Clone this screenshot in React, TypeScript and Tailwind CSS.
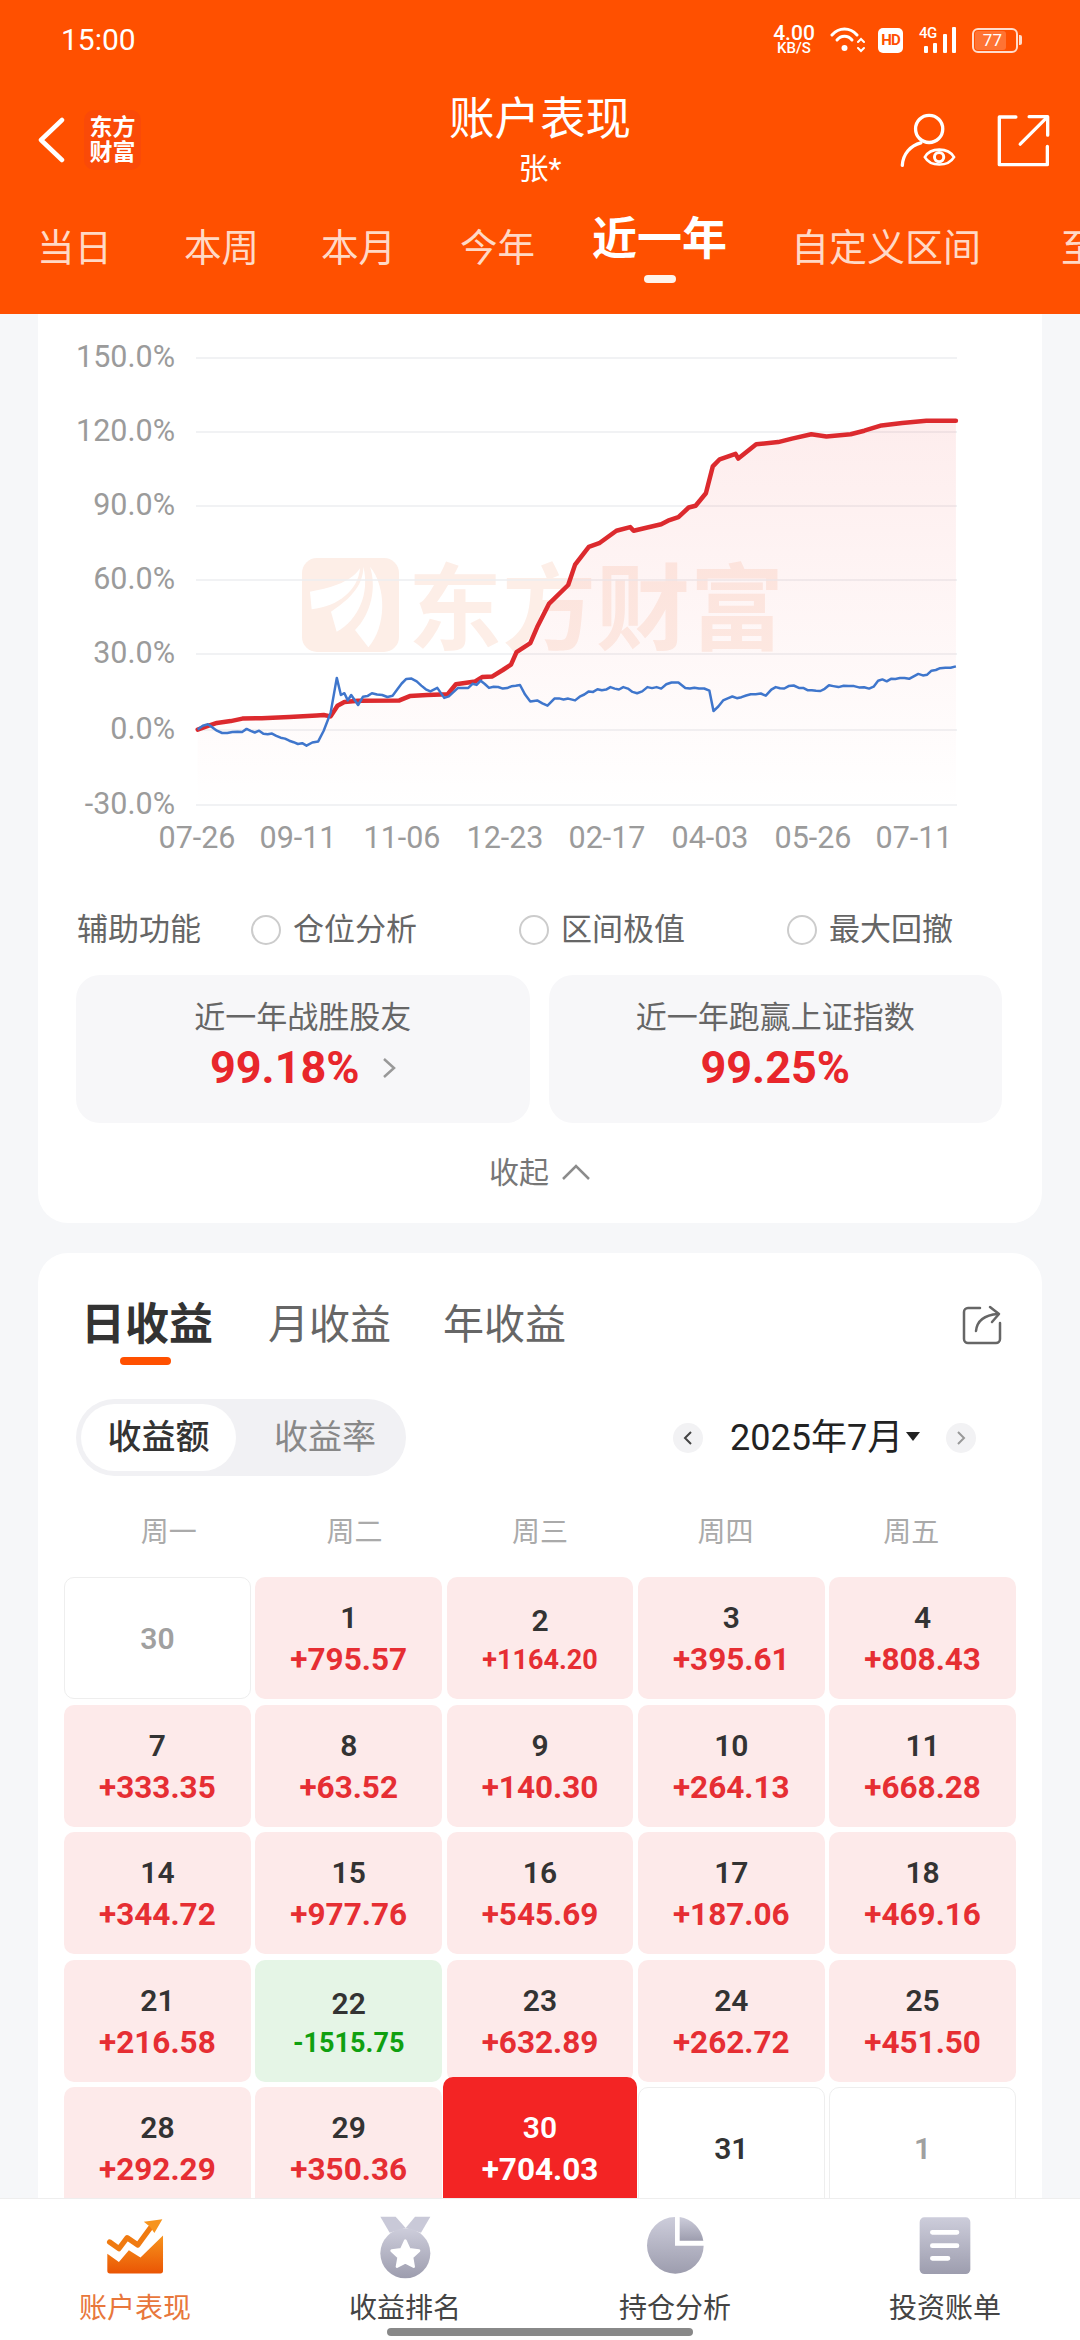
const redLine = [
  [287, 1147], [300, 1138], [315, 1128], [335, 1123], [352, 1116], [380, 1115], [420, 1112], [460, 1107], [470, 1106], [480, 1110],
  [490, 1080], [500, 1070], [520, 1066], [580, 1065], [595, 1053], [620, 1050], [650, 1048], [662, 1020], [690, 1012], [700, 1000],
  [715, 998], [730, 980], [742, 965], [750, 930], [770, 905], [780, 860], [797, 795], [825, 742], [835, 685], [855, 635],
  [870, 625], [895, 590], [915, 580], [920, 590], [960, 572], [970, 562], [985, 552], [1000, 525], [1010, 520], [1025, 485],
  [1035, 410], [1045, 390], [1068, 375], [1072, 388], [1098, 348], [1130, 342], [1150, 332], [1178, 320], [1200, 326], [1235, 320],
  [1255, 310], [1280, 295], [1310, 288], [1345, 282], [1388, 282],
];

const blueLine = [
  [287, 1147], [302, 1132], [315, 1150], [345, 1153], [358, 1145], [370, 1155], [395, 1158], [420, 1178], [445, 1192], [462, 1180],
  [470, 1150], [480, 1100], [489, 1002], [495, 1050], [500, 1045], [505, 1065], [510, 1050], [520, 1078], [527, 1055], [540, 1045],
  [555, 1050], [570, 1052], [590, 1005], [605, 1012], [625, 1040], [635, 1030], [645, 1058], [665, 1030], [680, 1030], [698, 1010],
  [710, 1030], [730, 1032], [755, 1022], [770, 1068], [780, 1065], [795, 1080], [805, 1060], [825, 1060], [835, 1065], [855, 1040],
  [880, 1035], [905, 1028], [925, 1045], [940, 1028], [960, 1032], [975, 1015], [985, 1015], [995, 1030], [1015, 1032], [1030, 1038],
  [1036, 1095], [1050, 1065], [1090, 1048], [1112, 1052], [1120, 1035], [1145, 1025], [1160, 1030], [1185, 1038], [1210, 1025], [1240, 1025],
  [1262, 1032], [1275, 1010], [1300, 1005], [1340, 995], [1365, 975], [1388, 970],
];

// traced from the chart, scaled back to page coordinates
const toPoints = (line: number[][]) =>
  line.map(([x, y]) => `${(x / 1.452).toFixed(1)},${(320 + y / 2.8).toFixed(1)}`).join(" ");

// the traced index line is too smooth, add the day to day wobble back
const wobble = (line: number[][]) => {
  const out: number[][] = [];
  line.slice(1).forEach(([x, y], i) => {
    const [px, py] = line[i];
    const steps = Math.max(1, Math.round((x - px) / 7));
    for (let s = 0; s < steps; s++) {
      const t = s / steps;
      const nx = px + (x - px) * t;
      const noise = s === 0 ? 0 : Math.sin(nx * 1.7) * 3.5 + Math.sin(nx * 0.63) * 2.5;
      out.push([nx, py + (y - py) * t + noise]);
    }
  });
  out.push(line[line.length - 1]);
  return out;
};

const gridLines = [
  { y: 358, label: "150.0%" },
  { y: 432, label: "120.0%" },
  { y: 506, label: "90.0%" },
  { y: 580, label: "60.0%" },
  { y: 654, label: "30.0%" },
  { y: 730, label: "0.0%" },
  { y: 805, label: "-30.0%" },
];

const xLabels = [
  { x: 197, label: "07-26" },
  { x: 298, label: "09-11" },
  { x: 402, label: "11-06" },
  { x: 505, label: "12-23" },
  { x: 607, label: "02-17" },
  { x: 710, label: "04-03" },
  { x: 813, label: "05-26" },
  { x: 914, label: "07-11" },
];

const tabs = [
  { label: "当日", cls: "ml-[37px]" },
  { label: "本周", cls: "ml-[72px]" },
  { label: "本月", cls: "ml-[62px]" },
  { label: "今年", cls: "ml-[64px]" },
];

type Day = { day: string; value?: string; kind: "up" | "down" | "off" | "plain" | "today" };

const days: Day[] = [
  { day: "30", kind: "off" },
  { day: "1", value: "+795.57", kind: "up" },
  { day: "2", value: "+1164.20", kind: "up" },
  { day: "3", value: "+395.61", kind: "up" },
  { day: "4", value: "+808.43", kind: "up" },
  { day: "7", value: "+333.35", kind: "up" },
  { day: "8", value: "+63.52", kind: "up" },
  { day: "9", value: "+140.30", kind: "up" },
  { day: "10", value: "+264.13", kind: "up" },
  { day: "11", value: "+668.28", kind: "up" },
  { day: "14", value: "+344.72", kind: "up" },
  { day: "15", value: "+977.76", kind: "up" },
  { day: "16", value: "+545.69", kind: "up" },
  { day: "17", value: "+187.06", kind: "up" },
  { day: "18", value: "+469.16", kind: "up" },
  { day: "21", value: "+216.58", kind: "up" },
  { day: "22", value: "-1515.75", kind: "down" },
  { day: "23", value: "+632.89", kind: "up" },
  { day: "24", value: "+262.72", kind: "up" },
  { day: "25", value: "+451.50", kind: "up" },
  { day: "28", value: "+292.29", kind: "up" },
  { day: "29", value: "+350.36", kind: "up" },
  { day: "30", value: "+704.03", kind: "today" },
  { day: "31", kind: "plain" },
  { day: "1", kind: "off" },
];

function StatusBar() {
  return (
    <div className="flex h-[80px] items-center justify-between pl-[61px] pr-[58px] text-white">
      <span className="text-[30px] leading-none">15:00</span>
      <div className="flex items-center">
        <div className="flex w-[44px] flex-col items-center font-medium">
          <span className="text-[21px] leading-[17px]">4.00</span>
          <span className="text-[15px] leading-[13px]">KB/S</span>
        </div>
        <svg className="ml-[14px]" width="35" height="27" viewBox="0 0 35 27" fill="none" stroke="white" strokeLinecap="round">
          <path d="M2 8 C9 0 20 0 27 8" strokeWidth="3" />
          <path d="M7 13 C11 8 18 8 22 13" strokeWidth="3" />
          <circle cx="14.5" cy="21" r="3" fill="white" stroke="none" />
          <path d="M28 15 L31 12 L34 15 M28 21 L31 24 L34 21" strokeWidth="2" />
        </svg>
        <span className="ml-[13px] flex h-[25px] w-[25px] items-center justify-center rounded-[5px] bg-white text-[15px] font-bold tracking-[-1px] text-[#ff5000]">
          HD
        </span>
        <div className="relative ml-[16px] h-[26px] w-[38px]">
          <span className="absolute left-0 top-[-1px] text-[15px] font-medium leading-[14px] tracking-[-0.5px]">4G</span>
          <svg className="absolute inset-0" width="38" height="26" viewBox="0 0 38 26" fill="white">
            <rect x="5" y="19" width="4" height="7" rx="1" />
            <rect x="14" y="16" width="4" height="10" rx="1" />
            <rect x="24" y="7" width="4" height="19" rx="1" />
            <rect x="33" y="0" width="4" height="26" rx="1" />
          </svg>
        </div>
        <div className="ml-[15px] flex items-center">
          <div className="h-[25px] w-[46px] rounded-[6px] border-2 border-white/80 p-[1px]">
            <div className="flex h-full w-[77%] items-center justify-center rounded-[3px] bg-white/20 pl-[4px] text-[17px] leading-none">
              77
            </div>
          </div>
          <div className="ml-[1px] h-[10px] w-[3px] rounded-r-[2px] bg-white/80" />
        </div>
      </div>
    </div>
  );
}

function NavBar() {
  return (
    <div className="grid h-[120px] grid-cols-[1fr_auto_1fr] items-center text-white">
      <div className="flex items-center pl-[38px]">
        <svg width="27" height="46" viewBox="0 0 27 46" fill="none" stroke="white" strokeWidth="4.5" strokeLinecap="round" strokeLinejoin="round">
          <polyline points="24,3 3,23 24,43" />
        </svg>
        <div className="ml-[19px] flex h-[60px] w-[57px] flex-col items-center justify-center rounded-[10px] bg-[#fa4a08] text-[23px] font-bold leading-[25px]">
          <span>东方</span>
          <span>财富</span>
        </div>
      </div>
      <div className="flex flex-col items-center">
        <span className="text-[45.5px] leading-[58px]">账户表现</span>
        <span className="text-[30px] leading-[40px]">张*</span>
      </div>
      <div className="flex items-center justify-end gap-[40px] pr-[30px]">
        <svg width="58" height="57" viewBox="30 30 175 170" fill="none" stroke="white" strokeWidth="10" strokeLinecap="round">
          <circle cx="121" cy="80" r="41" />
          <path d="M40 190 C42 155 65 130 96 122" />
          <path d="M108 165 C125 135 178 135 196 165 C178 195 125 195 108 165 Z" strokeWidth="8" />
          <circle cx="151" cy="165" r="14" strokeWidth="9" />
        </svg>
        <svg width="53" height="53" viewBox="315 35 160 158" fill="none" stroke="white" strokeWidth="10" strokeLinecap="round" strokeLinejoin="round">
          <path d="M372 43 H322 V187 H467 V132" />
          <path d="M385 125 L465 45" />
          <path d="M412 42 H468 V98" />
        </svg>
      </div>
    </div>
  );
}

function RangeTabs() {
  return (
    <div className="flex h-[114px] items-start overflow-hidden whitespace-nowrap">
      {tabs.map((t) => (
        <span key={t.label} className={`${t.cls} mt-[18px] shrink-0 text-[37.5px] leading-[60px] text-[#ffd9c6]`}>
          {t.label}
        </span>
      ))}
      <div className="ml-[57px] mt-[12px] flex shrink-0 flex-col items-center">
        <span className="text-[45px] font-bold leading-[56px] text-white">近一年</span>
        <span className="mt-[7px] h-[8px] w-[32px] rounded-full bg-[#fff3ea]" />
      </div>
      <span className="ml-[64px] mt-[18px] shrink-0 text-[38px] leading-[60px] text-[#ffd9c6]">自定义区间</span>
      <span className="ml-[80px] mt-[18px] shrink-0 text-[37.5px] leading-[60px] text-[#ffd9c6]">至今</span>
    </div>
  );
}

function Chart() {
  return (
    <svg className="block h-[566px] w-[1004px]" viewBox="38 314 1004 566">
      <defs>
        <linearGradient id="area" gradientUnits="userSpaceOnUse" x1="0" y1="400" x2="0" y2="810">
          <stop offset="0" stopColor="#ef2b2b" stopOpacity="0.09" />
          <stop offset="1" stopColor="#ef2b2b" stopOpacity="0" />
        </linearGradient>
      </defs>

      {/* watermark */}
      <g fill="#fdeee7">
        <rect x="302" y="558" width="97" height="94" rx="15" />
        <text x="408" y="643" fontSize="94" fontWeight="700">东方财富</text>
      </g>
      <g transform="translate(295 550) scale(0.3333)" fill="white">
        <path d="M195 55 C190 120 130 170 50 178 L45 125 C100 115 165 100 195 55 Z" />
        <path d="M205 50 C225 130 190 210 125 245 L108 185 C160 150 205 110 205 50 Z" />
        <path d="M225 50 C275 110 275 230 220 292 L180 240 C230 190 245 110 225 50 Z" />
      </g>

      {gridLines.map((g) => (
        <g key={g.label}>
          <line x1="196" x2="957" y1={g.y} y2={g.y} stroke="#eceef1" strokeWidth="1.5" />
          <text x="175" y={g.y - 2} textAnchor="end" dominantBaseline="central" fontSize="30.5" fill="#9b9b9b">
            {g.label}
          </text>
        </g>
      ))}
      {xLabels.map((l) => (
        <text key={l.label} x={l.x} y="837" textAnchor="middle" dominantBaseline="central" fontSize="30.5" fill="#9b9b9b">
          {l.label}
        </text>
      ))}

      <polygon points={`${toPoints(redLine)} 956,805 197.6,805`} fill="url(#area)" />
      <polyline points={toPoints(redLine)} fill="none" stroke="#dc2a2e" strokeWidth="4.5" strokeLinejoin="round" strokeLinecap="round" />
      <polyline points={toPoints(wobble(blueLine))} fill="none" stroke="#3f76cc" strokeWidth="2.5" strokeLinejoin="round" />
    </svg>
  );
}

function Radio({ label }: { label: string }) {
  return (
    <div className="flex w-[268px] shrink-0 items-center">
      <span className="h-[30px] w-[30px] rounded-full border-2 border-[#cccccc]" />
      <span className="ml-[12px] text-[31px] text-[#666666]">{label}</span>
    </div>
  );
}

function PerformanceCard() {
  return (
    <div className="h-[909px] rounded-b-[30px] bg-white">
      <Chart />
      <div className="ml-[39px] mt-[20px] flex h-[60px] items-center">
        <span className="w-[174px] shrink-0 text-[31px] text-[#666666]">辅助功能</span>
        <Radio label="仓位分析" />
        <Radio label="区间极值" />
        <Radio label="最大回撤" />
      </div>
      <div className="ml-[38px] mt-[15px] grid w-[926px] grid-cols-2 gap-[19px]">
        <div className="flex h-[148px] flex-col items-center rounded-[24px] bg-[#f7f7f9] pt-[22px]">
          <span className="text-[31px] leading-[42px] text-[#666666]">近一年战胜股友</span>
          <div className="flex h-[58px] items-center">
            <span className="text-[45px] font-bold text-[#e8262b]">99.18%</span>
            <svg className="ml-[22px]" width="14" height="22" viewBox="0 0 14 22" fill="none" stroke="#999999" strokeWidth="2.5">
              <polyline points="2,2 12,11 2,20" />
            </svg>
          </div>
        </div>
        <div className="flex h-[148px] flex-col items-center rounded-[24px] bg-[#f7f7f9] pt-[22px]">
          <span className="text-[31px] leading-[42px] text-[#666666]">近一年跑赢上证指数</span>
          <span className="text-[45px] font-bold leading-[58px] text-[#e8262b]">99.25%</span>
        </div>
      </div>
      <div className="mt-[19px] flex h-[60px] items-center justify-center">
        <span className="text-[30px] text-[#777777]">收起</span>
        <svg className="ml-[12px]" width="30" height="18" viewBox="0 0 30 18" fill="none" stroke="#8c8c8c" strokeWidth="2.5">
          <polyline points="2,16 15,3 28,16" />
        </svg>
      </div>
    </div>
  );
}

function DayCell({ d }: { d: Day }) {
  const tone = {
    up: "bg-[#fdeaea] text-[#333333]",
    down: "bg-[#e5f5e6] text-[#333333]",
    off: "border border-[#eeeeee] bg-white text-[#a0a0a0]",
    plain: "border border-[#eeeeee] bg-white text-[#333333]",
    today: "z-10 -mx-[4px] -mt-[10px] h-[132px] pt-[12px] bg-[#f32424] text-white",
  }[d.kind];
  const small = (d.value ?? "").length > 7;
  const valueColor = d.kind === "today" ? "text-white" : d.kind === "down" ? "text-[#10a010]" : "text-[#e62e33]";
  return (
    <div className={`relative flex h-[122px] flex-col items-center justify-center rounded-[10px] pt-[2px] ${tone}`}>
      <span className="text-[30px] font-semibold leading-[42px]">{d.day}</span>
      {d.value && (
        <span className={`font-bold ${valueColor} ${small ? "text-[27px] leading-[36px]" : "text-[31.5px] leading-[42px]"}`}>
          {d.value}
        </span>
      )}
    </div>
  );
}

function ProfitCard() {
  return (
    <div className="mt-[30px] rounded-t-[30px] bg-white pt-[42px]">
      <div className="flex h-[60px] items-center pl-[43px] pr-[40px]">
        <div className="relative">
          <span className="text-[44px] font-bold leading-[60px] text-[#333333]">日收益</span>
          <span className="absolute left-[39px] top-[62px] h-[8px] w-[51px] rounded-full bg-[#ff5000]" />
        </div>
        <span className="ml-[55px] text-[41px] leading-[60px] text-[#666666]">月收益</span>
        <span className="ml-[52px] text-[41px] leading-[60px] text-[#666666]">年收益</span>
        <svg className="ml-auto" width="40" height="40" viewBox="0 0 40 40" fill="none" stroke="#666666" strokeWidth="2.5" strokeLinecap="round" strokeLinejoin="round">
          <path d="M18 3 H6 a4 4 0 0 0 -4 4 V34 a4 4 0 0 0 4 4 H34 a4 4 0 0 0 4 -4 V18" />
          <path d="M14 26 C15 16 22 10 36 9" />
          <path d="M28 2 L37 9 L30 17" />
        </svg>
      </div>

      <div className="mt-[44px] flex items-center pl-[38px]">
        <div className="flex h-[77px] w-[330px] shrink-0 items-center rounded-full bg-[#f1f1f4] pl-[5px]">
          <span className="flex h-[67px] w-[155px] items-center justify-center rounded-full bg-white text-[34px] font-medium text-[#333333]">
            收益额
          </span>
          <span className="ml-[38px] text-[34px] text-[#888888]">收益率</span>
        </div>
        <span className="ml-[267px] flex h-[30px] w-[30px] shrink-0 items-center justify-center rounded-full bg-[#f2f2f4]">
          <svg width="10" height="16" viewBox="0 0 10 16" fill="none" stroke="#444444" strokeWidth="2">
            <polyline points="8,2 2,8 8,14" />
          </svg>
        </span>
        <span className="ml-[27px] shrink-0 text-[36px] leading-none text-[#222222]">2025年7月</span>
        <span className="ml-[3px] mb-[3px] h-0 w-0 shrink-0 border-x-[7px] border-t-[9px] border-x-transparent border-t-[#222222]" />
        <span className="ml-[26px] flex h-[30px] w-[30px] shrink-0 items-center justify-center rounded-full bg-[#f2f2f4]">
          <svg width="10" height="16" viewBox="0 0 10 16" fill="none" stroke="#999999" strokeWidth="2">
            <polyline points="2,2 8,8 2,14" />
          </svg>
        </span>
      </div>

      <div className="ml-[38px] mt-[36px] grid h-[40px] w-[928px] grid-cols-5 items-center text-center text-[28px] text-[#aaaaaa]">
        <span>周一</span>
        <span>周二</span>
        <span>周三</span>
        <span>周四</span>
        <span>周五</span>
      </div>

      <div className="ml-[26px] mt-[25px] grid w-[952px] grid-cols-5 gap-x-[4.5px] gap-y-[5.5px]">
        {days.map((d, i) => (
          <DayCell key={i} d={d} />
        ))}
      </div>
    </div>
  );
}

function BottomNav() {
  return (
    <div className="relative z-20 grid h-[142px] shrink-0 grid-cols-4 border-t border-[#eeeeee] bg-white text-[28px] text-[#444444]">
      <div className="flex flex-col items-center pt-[15px]">
        <svg className="h-[66px]" width="63" height="66" viewBox="40 25 190 190">
          <defs>
            <linearGradient id="navOrange" x1="0" y1="0" x2="0" y2="1">
              <stop offset="0" stopColor="#f7941d" />
              <stop offset="1" stopColor="#ea5504" />
            </linearGradient>
            <linearGradient id="navGray" x1="0" y1="0" x2="0" y2="1">
              <stop offset="0" stopColor="#cdcddb" />
              <stop offset="1" stopColor="#9d9dae" />
            </linearGradient>
          </defs>
          <path d="M50 140 L85 165 L115 130 L150 152 L218 85 V192 a8 8 0 0 1 -8 8 H58 a8 8 0 0 1 -8 -8 Z" fill="url(#navOrange)" />
          <polyline points="57,105 85,125 110,92 142,114 180,62" fill="none" stroke="#f07a10" strokeWidth="16" strokeLinejoin="round" strokeLinecap="round" />
          <polygon points="216,36 160,44 178,58 192,78" fill="#f7941d" />
        </svg>
        <span className="mt-[9px] leading-[40px] text-[#e8773c]">账户表现</span>
      </div>
      <div className="flex flex-col items-center pt-[15px]">
        <svg className="h-[66px]" width="55" height="66" viewBox="865 20 165 198">
          <path d="M872 28 H918 L948 62 L900 76 Z" fill="#c9c9d8" />
          <path d="M1022 28 H976 L948 62 L994 76 Z" fill="#c9c9d8" />
          <circle cx="947" cy="138" r="75" fill="url(#navGray)" />
          <polygon points="947,100 959,126 988,130 967,150 972,178 947,165 922,178 927,150 906,130 935,126" fill="white" stroke="white" strokeWidth="8" strokeLinejoin="round" />
        </svg>
        <span className="mt-[9px] leading-[40px]">收益排名</span>
      </div>
      <div className="flex flex-col items-center pt-[15px]">
        <svg className="h-[66px]" width="60" height="66" viewBox="43 27 180 198">
          <path d="M133 36 A85 85 0 1 0 219 122 L133 122 Z" fill="url(#navGray)" />
          <path d="M147 36 A85 85 0 0 1 218 107 L147 107 Z" fill="url(#navGray)" />
        </svg>
        <span className="mt-[9px] leading-[40px]">持仓分析</span>
      </div>
      <div className="flex flex-col items-center pt-[15px]">
        <svg className="h-[66px]" width="54" height="66" viewBox="863 25 162 198">
          <rect x="868" y="35" width="152" height="170" rx="14" fill="url(#navGray)" />
          <path d="M906 80 H980 M906 120 H980 M906 158 H953" stroke="white" strokeWidth="14" strokeLinecap="round" />
        </svg>
        <span className="mt-[9px] leading-[40px]">投资账单</span>
      </div>
      <span className="absolute left-[387px] top-[129px] h-[8px] w-[306px] rounded-full bg-[#888888]" />
    </div>
  );
}

export default function App() {
  return (
    <div className="relative flex h-[2340px] w-[1080px] flex-col overflow-hidden bg-[#f6f7f9] font-[Roboto,'Noto_Sans_CJK_SC',sans-serif]">
      <header className="h-[314px] shrink-0 bg-[#ff5000]">
        <StatusBar />
        <NavBar />
        <RangeTabs />
      </header>
      <main className="min-h-0 flex-1 overflow-hidden px-[38px]">
        <PerformanceCard />
        <ProfitCard />
      </main>
      <BottomNav />
    </div>
  );
}
